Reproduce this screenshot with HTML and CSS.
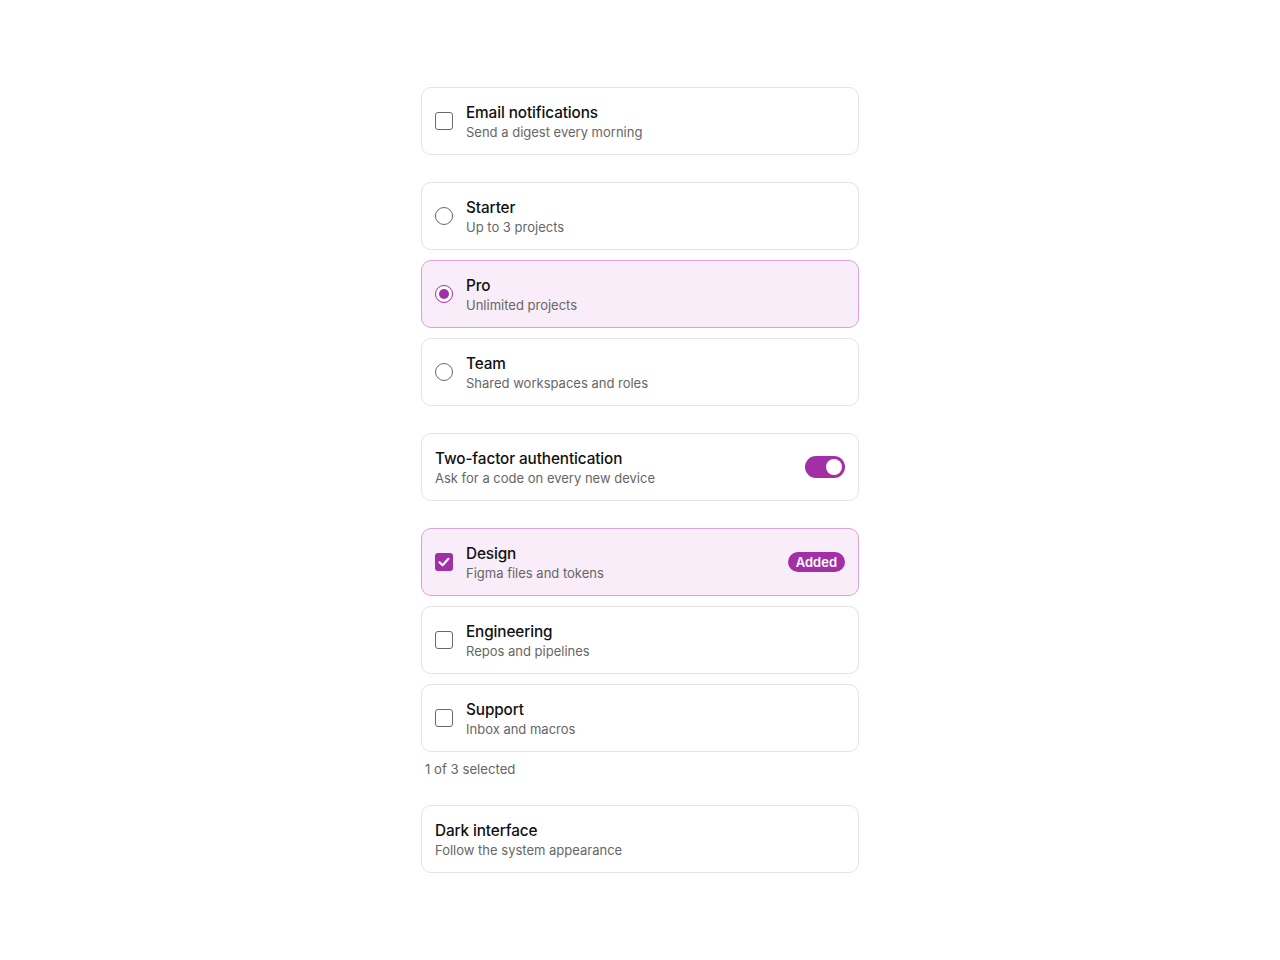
FILE: index.html
```html
<!DOCTYPE html>
<html lang="en">
<head>
<meta charset="utf-8">
<title>Choice cards</title>
<link rel="stylesheet" href="styles.css">
</head>
<body>
<main class="stack">
  <section class="group">
    <label class="card">
      <span class="checkbox"></span>
      <span class="text">
        <span class="title">Email notifications</span>
        <span class="desc">Send a digest every morning</span>
      </span>
    </label>
  </section>

  <section class="group">
    <label class="card">
      <span class="radio"></span>
      <span class="text">
        <span class="title">Starter</span>
        <span class="desc">Up to 3 projects</span>
      </span>
    </label>
    <label class="card selected">
      <span class="radio checked"></span>
      <span class="text">
        <span class="title">Pro</span>
        <span class="desc">Unlimited projects</span>
      </span>
    </label>
    <label class="card">
      <span class="radio"></span>
      <span class="text">
        <span class="title">Team</span>
        <span class="desc">Shared workspaces and roles</span>
      </span>
    </label>
  </section>

  <section class="group">
    <label class="card">
      <span class="text grow">
        <span class="title">Two-factor authentication</span>
        <span class="desc">Ask for a code on every new device</span>
      </span>
      <span class="switch on"><span class="knob"></span></span>
    </label>
  </section>

  <section class="group">
    <label class="card selected">
      <span class="checkbox checked">
        <svg viewBox="0 0 18 18" width="18" height="18"><path d="M4.5 9.3 L7.6 12.2 L13.4 5.8" fill="none" stroke="#fff" stroke-width="2.2" stroke-linecap="round" stroke-linejoin="round"/></svg>
      </span>
      <span class="text grow">
        <span class="title">Design</span>
        <span class="desc">Figma files and tokens</span>
      </span>
      <span class="badge">Added</span>
    </label>
    <label class="card">
      <span class="checkbox"></span>
      <span class="text">
        <span class="title">Engineering</span>
        <span class="desc">Repos and pipelines</span>
      </span>
    </label>
    <label class="card">
      <span class="checkbox"></span>
      <span class="text">
        <span class="title">Support</span>
        <span class="desc">Inbox and macros</span>
      </span>
    </label>
    <p class="count">1 of 3 selected</p>
  </section>

  <section class="group">
    <label class="card">
      <span class="text grow">
        <span class="title">Dark interface</span>
        <span class="desc">Follow the system appearance</span>
      </span>
    </label>
  </section>
</main>
</body>
</html>
```

FILE: styles.css
```css
* { box-sizing: border-box; }

html, body {
  margin: 0;
  background: #ffffff;
}

body {
  font-family: Inter, "Liberation Sans", sans-serif;
  color: #111111;
}

.stack {
  width: 438px;
  margin: 0 auto;
  padding-top: 87px;
  display: flex;
  flex-direction: column;
  gap: 27px;
}

.group {
  display: flex;
  flex-direction: column;
  gap: 10px;
}

.card {
  height: 68px;
  display: flex;
  align-items: center;
  gap: 13px;
  padding: 0 13px;
  border: 1px solid #e4e4e7;
  border-radius: 10px;
  background: #ffffff;
}

.card.selected {
  background: #f8edf8;
  border-color: #dda2da;
}

.text {
  display: flex;
  flex-direction: column;
  min-width: 0;
  padding-top: 3px;
}

.grow { flex: 1; }

.title {
  font-size: 15.3px;
  line-height: 20px;
  font-weight: 500;
  color: #111111;
  letter-spacing: -0.1px;
}

.desc {
  font-size: 13px;
  line-height: 19px;
  color: #666666;
}

.checkbox {
  flex: none;
  width: 18px;
  height: 18px;
  border: 1.5px solid #6a6a6a;
  border-radius: 3px;
  background: #ffffff;
  display: flex;
  align-items: center;
  justify-content: center;
}

.checkbox.checked {
  border: none;
  background: #a32fa6;
}

.radio {
  flex: none;
  width: 18px;
  height: 18px;
  border: 1.5px solid #6a6a6a;
  border-radius: 50%;
  background: #ffffff;
  display: flex;
  align-items: center;
  justify-content: center;
}

.radio.checked {
  border-color: #a32fa6;
}

.radio.checked::after {
  content: "";
  width: 10px;
  height: 10px;
  border-radius: 50%;
  background: #a32fa6;
}

.switch {
  flex: none;
  width: 40px;
  height: 22px;
  border-radius: 11px;
  background: #a32fa6;
  padding: 3px;
  display: flex;
  justify-content: flex-end;
}

.knob {
  width: 16px;
  height: 16px;
  border-radius: 50%;
  background: #ffffff;
}

.badge {
  flex: none;
  height: 20px;
  padding: 0 8px;
  border-radius: 10px;
  background: #a32fa6;
  color: #ffffff;
  font-size: 13px;
  font-weight: 600;
  line-height: 20px;
}

.count {
  margin: -2px 0 0 4px;
  font-size: 13.2px;
  line-height: 18px;
  color: #666666;
}
```
